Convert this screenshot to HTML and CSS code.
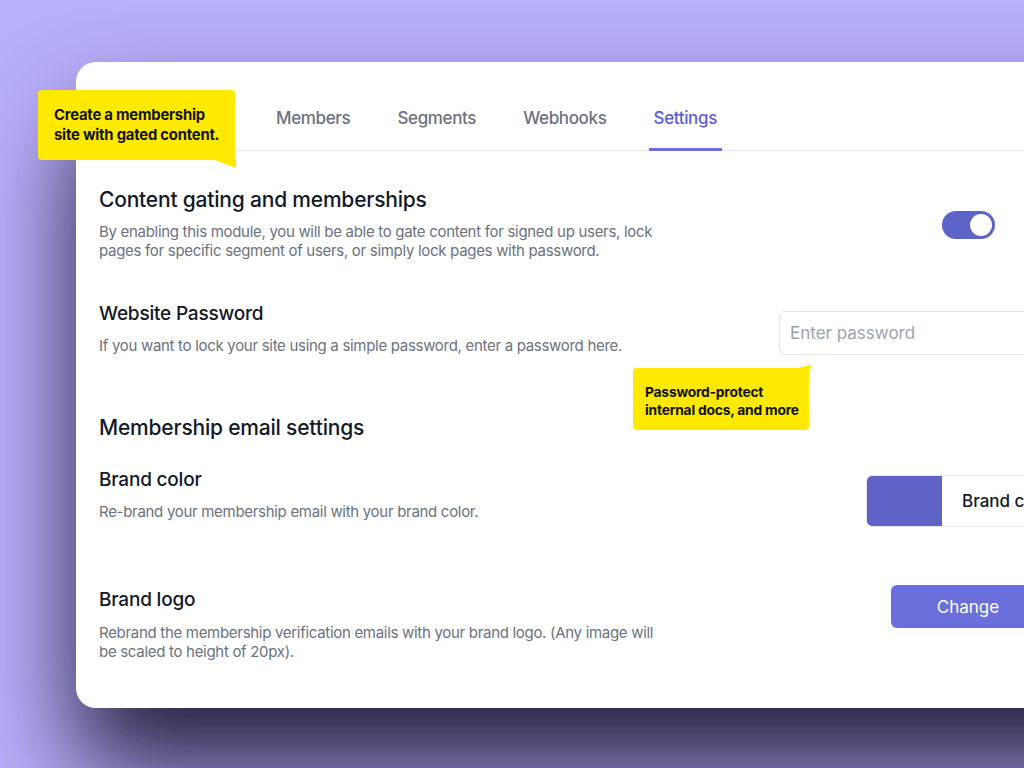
FILE: index.html
```html
<!DOCTYPE html>
<html lang="en">
<head>
    <meta charset="UTF-8">
    <title>Settings</title>
    <link rel="stylesheet" href="styles.css">
</head>
<body>
    <div class="stage">
        <div class="card">
            <nav class="tabs">
                <a class="tab">Members</a>
                <a class="tab">Segments</a>
                <a class="tab">Webhooks</a>
                <a class="tab active">Settings</a>
            </nav>

            <div class="content">
                <div class="row row-gating">
                    <div class="text">
                        <h2>Content gating and memberships</h2>
                        <p>By enabling this module, you will be able to gate content for signed up users, lock pages for specific segment of users, or simply lock pages with password.</p>
                    </div>
                    <div class="control">
                        <span class="toggle"><span class="knob"></span></span>
                    </div>
                </div>

                <div class="row row-password">
                    <div class="text">
                        <h3>Website Password</h3>
                        <p>If you want to lock your site using a simple password, enter a password here.</p>
                    </div>
                    <div class="control">
                        <input class="password" type="text" placeholder="Enter password">
                    </div>
                </div>

                <h2 class="section-title">Membership email settings</h2>

                <div class="row row-color">
                    <div class="text">
                        <h3>Brand color</h3>
                        <p>Re-brand your membership email with your brand color.</p>
                    </div>
                    <div class="control">
                        <div class="color-field">
                            <span class="swatch"></span>
                            <span class="color-label">Brand color</span>
                        </div>
                    </div>
                </div>

                <div class="row row-logo">
                    <div class="text">
                        <h3>Brand logo</h3>
                        <p>Rebrand the membership verification emails with your brand logo. (Any image will be scaled to height of 20px).</p>
                    </div>
                    <div class="control">
                        <button class="change-btn">Change</button>
                    </div>
                </div>
            </div>
        </div>

        <!-- подсказки поверх карточки -->
        <div class="callout callout-top">Create a membership<br>site with gated content.</div>
        <div class="callout callout-mid">Password-protect<br>internal docs, and more</div>
    </div>
</body>
</html>
```

FILE: styles.css
```css
* {
    box-sizing: border-box;
}
html, body {
    margin: 0;
    height: 100%;
    overflow: hidden;
}
body {
    background: #b9b0fc;
    font-family: Inter, "Noto Sans", sans-serif;
    color: #111827;
}
.stage {
    position: relative;
    height: 768px;
    padding: 62px 0 0 76px;
}
.card {
    width: 1100px;
    background: #fff;
    border-radius: 20px 0 0 20px;
    box-shadow: 0 60px 100px rgba(30, 24, 50, 0.95);
}

/* табы */
.tabs {
    display: flex;
    align-items: flex-end;
    gap: 37px;
    height: 89px;
    padding-left: 195px;
    border-bottom: 1px solid #e5e7eb;
}
.tab {
    padding: 0 5px 18px;
    margin-bottom: -1px;
    font-size: 17px;
    line-height: 24px;
    font-weight: 500;
    letter-spacing: -0.35px;
    color: #6b7280;
    border-bottom: 3px solid transparent;
}
.tab.active {
    color: #5b61d1;
    border-bottom-color: #6a6fdc;
}

.content {
    padding: 35px 23px 47px;
}
.row {
    display: flex;
    align-items: flex-start;
}
.text {
    width: 580px;
    flex-shrink: 0;
}
.control {
    flex: 1;
    padding-left: 100px;
}
h2, h3, p {
    margin: 0;
}
h2 {
    font-size: 21px;
    line-height: 28px;
    font-weight: 500;
    letter-spacing: -0.2px;
}
h3 {
    font-size: 19px;
    line-height: 26px;
    font-weight: 500;
    letter-spacing: -0.2px;
}
p {
    margin-top: 9px;
    max-width: 560px;
    font-size: 15px;
    line-height: 19px;
    letter-spacing: -0.3px;
    color: #6b7280;
}
h2 + p {
    margin-top: 8px;
}
.row-logo p {
    margin-top: 10px;
}

.row-password {
    margin-top: 41px;
}
.section-title {
    margin-top: 59px;
}
.row-color {
    margin-top: 25px;
}
.row-logo {
    margin-top: 60px;
}

/* переключатель */
.toggle {
    display: block;
    width: 53px;
    height: 28px;
    margin: 25px 0 0 163px;
    border-radius: 14px;
    background: #5c63c9;
    position: relative;
}
.knob {
    position: absolute;
    right: 3px;
    top: 3px;
    width: 22px;
    height: 22px;
    border-radius: 50%;
    background: #fff;
}

.password {
    display: block;
    width: 320px;
    height: 44px;
    margin-top: 10px;
    padding: 0 10px;
    border: 1px solid #e2e4e9;
    border-radius: 6px;
    font-family: inherit;
    font-size: 17px;
    color: #111827;
    outline: none;
}
.password::placeholder {
    color: #9ca3af;
}

.color-field {
    display: flex;
    align-items: center;
    width: 300px;
    height: 52px;
    margin: 8px 0 0 87px;
    border: 1px solid #e8e9ee;
    border-radius: 6px;
    overflow: hidden;
}
.swatch {
    width: 75px;
    height: 100%;
    background: #5e63c5;
}
.color-label {
    padding-left: 20px;
    font-size: 17px;
    font-weight: 500;
}

.change-btn {
    display: block;
    width: 154px;
    height: 43px;
    margin: -2px 0 0 112px;
    border: none;
    border-radius: 6px;
    background: #6a6fdc;
    color: #fff;
    font-family: inherit;
    font-size: 17px;
    cursor: pointer;
}

/* жёлтые подсказки */
.callout {
    position: absolute;
    background: #ffe900;
    color: #111;
    font-weight: 700;
    border-radius: 4px;
}
.callout::after {
    content: "";
    position: absolute;
    background: #ffe900;
}
.callout-top {
    left: 38px;
    top: 90px;
    width: 197px;
    height: 70px;
    padding: 15px 0 0 16px;
    font-size: 14.8px;
    line-height: 20px;
    letter-spacing: -0.2px;
}
.callout-top::after {
    right: -1px;
    bottom: -8px;
    width: 24px;
    height: 9px;
    clip-path: polygon(0 0, 100% 0, 100% 100%);
}
.callout-mid {
    left: 633px;
    top: 368px;
    width: 176px;
    height: 62px;
    padding: 15px 0 0 12px;
    font-size: 13.8px;
    line-height: 18px;
    letter-spacing: -0.2px;
    border-top-right-radius: 0;
}
.callout-mid::after {
    right: -2px;
    top: -3px;
    width: 18px;
    height: 4px;
    clip-path: polygon(0 100%, 100% 0, 100% 100%);
}
```
